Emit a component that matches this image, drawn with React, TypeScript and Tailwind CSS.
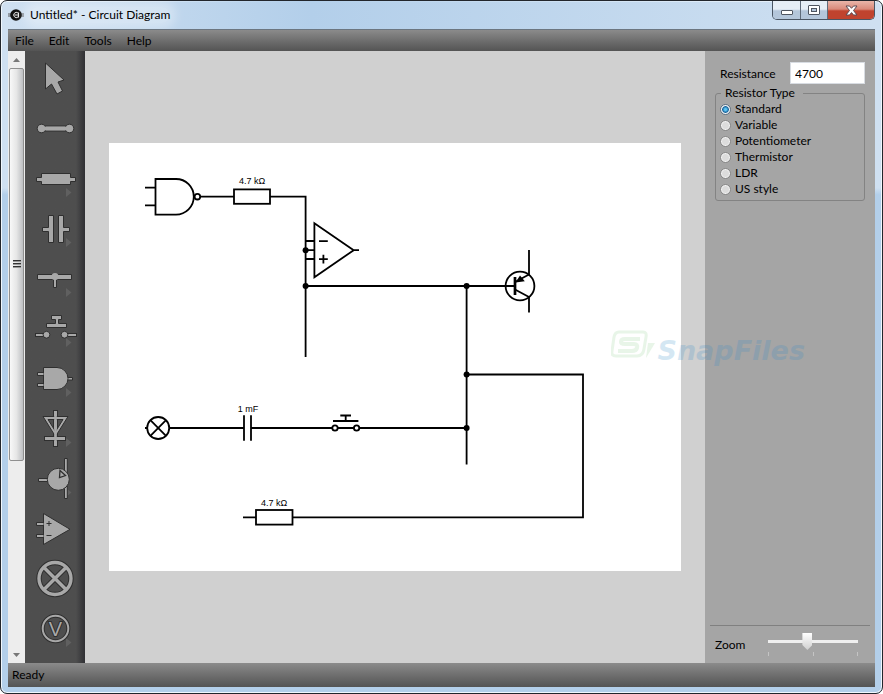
import { useState } from "react";
import type { ReactNode } from "react";

const resistorTypes = ["Standard", "Variable", "Potentiometer", "Thermistor", "LDR", "US style"];

type Tool = {
    name: string;
    hasMenu: boolean;
    icon: ReactNode;
};

const tools: Tool[] = [
    {
        name: "Select",
        hasMenu: false,
        icon: <path d="M20.5 9 V35 L26.5 30 L32 40 L37.5 37 L33 28 L39 26 Z"/>,
    },
    {
        name: "Wire",
        hasMenu: false,
        icon: (
            <>
                <rect x="17" y="22" width="27" height="5"/>
                <circle cx="16.5" cy="24.5" r="4.3"/>
                <circle cx="44.5" cy="24.5" r="4.3"/>
                <rect x="16" y="22.8" width="29" height="3.4" stroke="none"/>
            </>
        ),
    },
    {
        name: "Resistor",
        hasMenu: true,
        icon: <path d="M11.5 23.5 H16.5 V19.5 H45.5 V23.5 H50.5 V27.5 H45.5 V30.5 H16.5 V27.5 H11.5 Z"/>,
    },
    {
        name: "Capacitor",
        hasMenu: true,
        icon: (
            <>
                <path d="M17.5 23.5 H23.5 V11.5 H28.5 V38.5 H23.5 V27.5 H17.5 Z"/>
                <path d="M44.5 23.5 H38.5 V11.5 H33.5 V38.5 H38.5 V27.5 H44.5 Z"/>
            </>
        ),
    },
    {
        name: "Rail",
        hasMenu: true,
        icon: (
            <>
                <path d="M12.5 20.5 H46.5 V25.5 H31.5 V33.5 H28.5 V25.5 H12.5 Z"/>
                <circle cx="30" cy="22.5" r="3.5" stroke="none"/>
            </>
        ),
    },
    {
        name: "Push switch",
        hasMenu: true,
        icon: (
            <>
                <path d="M26.5 11.5 H36.5 V15.5 H33.5 V19.5 H41.5 V23.5 H21.5 V19.5 H30.5 V15.5 H26.5 Z"/>
                <rect x="10.5" y="29.5" width="9" height="3"/>
                <rect x="41.5" y="29.5" width="10" height="3"/>
                <circle cx="21.5" cy="30.7" r="3.4"/>
                <circle cx="39.5" cy="30.7" r="3.4"/>
            </>
        ),
    },
    {
        name: "Logic gate",
        hasMenu: true,
        icon: (
            <>
                <path d="M12.5 18.5 H20 V21.5 H12.5 Z M12.5 29.5 H20 V32.5 H12.5 Z M40 23.5 H47.5 V26 H40 Z"/>
                <path d="M18.5 13.5 H32 A11 11 0 0 1 32 35.5 H18.5 Z"/>
                <path d="M17 19.5 H21 V20.5 H17 Z M17 30.5 H21 V31.5 H17 Z" stroke="none"/>
            </>
        ),
    },
    {
        name: "Diode",
        hasMenu: true,
        icon: (
            <>
                <rect x="28.5" y="6.5" width="4" height="36"/>
                <path d="M18 12.5 H43 L30.5 32.5 Z M23 15.5 L30.5 27.5 L38 15.5 Z" fillRule="evenodd"/>
                <rect x="19.5" y="32.5" width="21" height="4"/>
                <rect x="29.2" y="8" width="2.6" height="34" stroke="none"/>
            </>
        ),
    },
    {
        name: "Transistor",
        hasMenu: true,
        icon: (
            <>
                <path d="M13.5 24.5 H24 V27.5 H13.5 Z M39.5 4.5 H42.3 V44.5 H39.5 Z"/>
                <circle cx="33.3" cy="25.3" r="11"/>
                <path d="M35 16.5 L40.5 21.5 L34.5 23.5 Z" strokeWidth="1.3"/>
            </>
        ),
    },
    {
        name: "Op amp",
        hasMenu: false,
        icon: (
            <>
                <path d="M11.5 18.5 H20 V21.5 H11.5 Z M11.5 30.5 H20 V33.5 H11.5 Z"/>
                <path d="M18.5 9.5 L45 25.3 L18.5 40.5 Z"/>
                <path d="M17 19.5 H20 V20.5 H17 Z M17 31.5 H20 V32.5 H17 Z" stroke="none"/>
                <path d="M21.5 19.5 H26.5 M24 17 V22 M21.5 31.5 H26.5"/>
            </>
        ),
    },
    {
        name: "Lamp",
        hasMenu: false,
        icon: (
            <>
                <g fill="none" stroke="#2f2f2f" strokeWidth="5.4">
                    <circle cx="30" cy="24.5" r="16"/>
                    <path d="M19 13.5 L41 35.5 M41 13.5 L19 35.5"/>
                </g>
                <g fill="none" stroke="#a8a8a8" strokeWidth="3.4">
                    <circle cx="30" cy="24.5" r="16"/>
                    <path d="M19 13.5 L41 35.5 M41 13.5 L19 35.5"/>
                </g>
            </>
        ),
    },
    {
        name: "Voltmeter",
        hasMenu: true,
        icon: (
            <>
                <circle cx="30.5" cy="24.5" r="12.8" fill="none" stroke="#2f2f2f" strokeWidth="4"/>
                <circle cx="30.5" cy="24.5" r="12.8" fill="none" stroke="#a8a8a8" strokeWidth="2"/>
                <text
                    x="30.5"
                    y="31.5"
                    textAnchor="middle"
                    paintOrder="stroke"
                    strokeWidth="2"
                    className="font-['Liberation_Sans',sans-serif] text-[20px]"
                >
                    V
                </text>
            </>
        ),
    },
];

const TitleBar = () => (
    <header className="flex h-7 shrink-0 items-start justify-between bg-linear-to-r from-transparent via-[#b3cfea] via-35% to-transparent">
        <div className="flex h-7 items-center gap-1.5">
            <svg className="h-4 w-4" viewBox="0 0 16 16">
                <path d="M0 7 H16 M0 9 H16" stroke="#555" strokeWidth="1"/>
                <circle cx="8" cy="8" r="5.8" fill="#111"/>
                <path d="M10 6 A2.6 2.6 0 1 0 10 10 M10.5 5.5 V10.5 M6.5 8 H10" fill="none" stroke="#eee" strokeWidth="1"/>
            </svg>
            <h1 className="rounded-full bg-white/30 text-xs shadow-[0_0_10px_6px_rgba(255,255,255,0.3)]">
                Untitled* - Circuit Diagram
            </h1>
        </div>
        <div className="flex h-[19px] overflow-hidden rounded-b-[5px] border border-t-0 border-[#4a5563]">
            <button
                type="button"
                aria-label="Minimize"
                className="flex w-7 items-center justify-center border-r border-[#5f6b7a] bg-linear-to-b from-[#e6eef6] from-45% to-[#b4c6da] to-55% pt-1"
            >
                <span className="h-[5px] w-3 rounded-[1px] border border-[#4f5560] bg-white"/>
            </button>
            <button
                type="button"
                aria-label="Maximize"
                className="flex w-[27px] items-center justify-center border-r border-[#5f6b7a] bg-linear-to-b from-[#e6eef6] from-45% to-[#b4c6da] to-55%"
            >
                <span className="flex h-[10px] w-3 items-center justify-center rounded-[1px] border border-[#4f5560] bg-white">
                    <span className="h-1 w-1.5 border border-[#4f5560] bg-[#b4c6da]"/>
                </span>
            </button>
            <button
                type="button"
                aria-label="Close"
                className="flex w-[46px] items-center justify-center bg-linear-to-b from-[#e9b5a9] via-[#d98a7b] via-45% to-[#c0432e] to-55%"
            >
                <svg className="h-[11px] w-[13px]" viewBox="0 0 13 11">
                    <path d="M1 1 H4.5 L6.5 3.3 L8.5 1 H12 L8.5 5.5 L12 10 H8.5 L6.5 7.6 L4.5 10 H1 L4.5 5.5 Z" fill="#fff" stroke="#5b4a52"/>
                </svg>
            </button>
        </div>
    </header>
);

const MenuBar = () => (
    <nav className="flex h-[22px] shrink-0 items-center gap-[15px] border-t border-[#6c7680] bg-linear-to-b from-[#8b8b8b] to-[#545454] pl-[7px] text-xs">
        {["File", "Edit", "Tools", "Help"].map((item) => (
            <button key={item} type="button">{item}</button>
        ))}
    </nav>
);

const ScrollBar = () => (
    <div className="flex w-[17px] shrink-0 flex-col bg-[#ededed]">
        <button type="button" aria-label="Scroll up" className="flex h-[17px] items-center justify-center">
            <svg className="h-1 w-[7px]" viewBox="0 0 7 4"><path d="M0 4 L3.5 0 L7 4 Z" fill="#777"/></svg>
        </button>
        <div className="mx-px flex grow-[392] basis-0 flex-col items-center justify-center gap-px rounded-xs border border-[#8f8f8f] bg-linear-to-r from-[#f8f8f8] via-[#e6e6e6] to-[#bdbfc2]">
            <span className="h-0.5 w-2 border-t border-[#333] bg-[#999]"/>
            <span className="h-0.5 w-2 border-t border-[#333] bg-[#999]"/>
            <span className="h-0.5 w-2 border-t border-[#333] bg-[#999]"/>
        </div>
        <div className="grow-[186] basis-0"/>
        <button type="button" aria-label="Scroll down" className="flex h-[17px] items-center justify-center">
            <svg className="h-1 w-[7px]" viewBox="0 0 7 4"><path d="M0 0 L3.5 4 L7 0 Z" fill="#777"/></svg>
        </button>
    </div>
);

const Toolbox = () => (
    <div className="flex w-[60px] shrink-0 flex-col bg-linear-to-r from-[#4e4e4e] from-85% to-[#303034] pt-[3px]">
        {tools.map((tool) => (
            <button key={tool.name} type="button" aria-label={tool.name} className="h-[50px]">
                <svg className="h-[50px] w-[60px]" viewBox="0 0 60 50" fill="#a8a8a8" stroke="#2f2f2f" strokeWidth="1">
                    {tool.hasMenu && <path d="M41 34 L46.5 38.5 L41 43 Z" fill="#606060" stroke="none"/>}
                    {tool.icon}
                </svg>
            </button>
        ))}
    </div>
);

const Circuit = () => (
    <svg className="h-auto w-[572px] bg-white" viewBox="109 143 572 428" role="img" aria-label="Circuit">
        <g fill="none" stroke="#000" strokeWidth="1.8">
            {/* nand gate */}
            <path d="M145 187.7 H155.5 M145 205.3 H155.5"/>
            <path d="M155.5 179 H176 A17.8 17.8 0 0 1 176 214.6 H155.5 Z"/>
            <circle cx="197.4" cy="196.7" r="2.8"/>
            {/* top resistor */}
            <path d="M200.5 196.7 H234 M270 196.7 H305.6 V357"/>
            <rect x="234" y="189.4" width="36" height="14.4"/>
            {/* op amp */}
            <path d="M305.6 241 H314.4 M305.6 250.2 H314.4 M305.6 259 H314.4"/>
            <path d="M314.4 223.3 L353.7 250.2 L314.4 277.2 Z M353.7 250.2 H359"/>
            <path d="M319 241.2 H327.8 M319 259.2 H327.8 M323.4 254.8 V263.6"/>
            {/* transistor */}
            <path d="M305.6 286 H515"/>
            <circle cx="520" cy="286" r="14.4"/>
            <path d="M515 277 V295" strokeWidth="2.7"/>
            <path d="M529 250 V274.5 L515 282 M515 289.5 L529 297 V312.5"/>
            {/* right hand loop */}
            <path d="M466.6 286 V464.5 M466.6 374.5 H583 V517.4 H292.5 M256 517.4 H243"/>
            <rect x="256" y="510" width="36.5" height="14.6"/>
            {/* lamp */}
            <circle cx="158.2" cy="428" r="11"/>
            <path d="M150.4 420.2 L166 435.8 M166 420.2 L150.4 435.8 M145 428 H147.5"/>
            {/* capacitor */}
            <path d="M169.5 428 H244 M251 428 H332.3 M244 415.3 V440.7 M251 415.3 V440.7"/>
            {/* push switch */}
            <circle cx="335" cy="428" r="2.7"/>
            <circle cx="356.6" cy="428" r="2.7"/>
            <path d="M337.7 428 H353.9 M359.3 428 H466.6 M333 421 H358.4 M345.7 421 V415.5 M340.3 415.5 H351"/>
        </g>
        <path d="M515.5 282.5 L520 275.6 L524.8 281.2 Z"/>
        <circle cx="305.6" cy="250.2" r="3"/>
        <circle cx="305.6" cy="286" r="3"/>
        <circle cx="466.6" cy="286" r="3"/>
        <circle cx="466.6" cy="374.5" r="3"/>
        <circle cx="466.6" cy="428" r="3"/>
        <g textAnchor="middle" className="font-['Liberation_Sans',sans-serif] text-[9px]">
            <text x="252" y="184">4.7 kΩ</text>
            <text x="248" y="412">1 mF</text>
            <text x="274" y="506">4.7 kΩ</text>
        </g>
    </svg>
);

const Properties = () => {
    const [resistance, setResistance] = useState("4700");
    const [resistorType, setResistorType] = useState("Standard");
    const [zoom, setZoom] = useState(43);

    return (
        <aside className="flex w-[170px] shrink-0 flex-col justify-between bg-[#a5a5a5] text-xs">
            <div className="px-2.5 pt-[11px]">
                <div className="flex h-[23px] items-start justify-between pl-[5px]">
                    <label htmlFor="resistance" className="pt-1">Resistance</label>
                    <input
                        id="resistance"
                        type="text"
                        value={resistance}
                        onChange={(e) => setResistance(e.target.value)}
                        className="h-[22px] w-[75px] border border-[#d8dce2] bg-white px-1"
                    />
                </div>
                <fieldset className="rounded-[3px] border border-[#838383] px-1 pb-[3px]">
                    <legend className="ml-px px-1 pr-2 leading-4">Resistor Type</legend>
                    {resistorTypes.map((type) => (
                        <label key={type} className="flex h-4 items-center gap-1">
                            <input
                                type="radio"
                                name="resistor-type"
                                checked={resistorType === type}
                                onChange={() => setResistorType(type)}
                                className="h-[11px] w-[11px] appearance-none rounded-full border border-[#868686] bg-[#dcdcdc] shadow-[inset_0_0_0_1px_#f4f4f4] checked:border-[#5d6f80] checked:bg-[radial-gradient(circle,#5cc4f2_0_1px,#17639c_3px,#e8f0f6_4px)]"
                            />
                            {type}
                        </label>
                    ))}
                </fieldset>
            </div>
            <div className="mx-[5px] flex h-[38px] items-center justify-between border-t border-[#808080] pr-3 pl-[5px]">
                <label htmlFor="zoom">Zoom</label>
                <div className="w-[90px]">
                    <input
                        id="zoom"
                        type="range"
                        min="0"
                        max="100"
                        value={zoom}
                        onChange={(e) => setZoom(Number(e.target.value))}
                        className="block h-[17px] w-full appearance-none bg-transparent [&::-webkit-slider-runnable-track]:h-[3px] [&::-webkit-slider-runnable-track]:bg-[#efefef] [&::-webkit-slider-thumb]:-mt-[7px] [&::-webkit-slider-thumb]:h-[17px] [&::-webkit-slider-thumb]:w-[10px] [&::-webkit-slider-thumb]:appearance-none [&::-webkit-slider-thumb]:bg-linear-to-b [&::-webkit-slider-thumb]:from-white [&::-webkit-slider-thumb]:to-[#d0d0d0] [&::-webkit-slider-thumb]:[clip-path:polygon(0_0,100%_0,100%_70%,50%_100%,0_70%)]"
                    />
                    <div className="mt-0.5 flex h-1 justify-between">
                        <span className="w-px bg-[#c4c4c4]"/>
                        <span className="w-px bg-[#c4c4c4]"/>
                        <span className="w-px bg-[#c4c4c4]"/>
                    </div>
                </div>
            </div>
        </aside>
    );
};

const Watermark = () => (
    <div className="pointer-events-none absolute top-[328px] right-[77px] flex items-start gap-0.5 opacity-20">
        <svg className="h-8 w-[44px]" viewBox="0 0 44 32" fill="none" stroke="#8fd08f">
            <path d="M8 3 H32 Q36 3 35 8 L33 20 Q32 27 26 27 H5 Q0 27 1 22 L3 8 Q4 3 8 3 Z" strokeWidth="3"/>
            <path d="M29 10 H14 Q10 10 10 13 Q10 15 14 15 H23 Q27 15 26 19 Q25 22 21 22 H7" strokeWidth="4"/>
            <path d="M37 14 H44 L35 29 Z" fill="#8fd08f" stroke="none"/>
        </svg>
        <span className="pt-1.5 font-['DejaVu_Sans',sans-serif] text-[27px] leading-8 font-bold text-[#2f8ac8] italic">SnapFiles</span>
    </div>
);

const App = () => (
    <div className="relative flex h-screen min-h-[694px] flex-col overflow-hidden rounded-[7px] border border-[#22262c] bg-linear-to-b from-[#cfe0f1] from-27% to-[#b3cfea] to-28% px-[7px] pb-[6px] font-['Lato','Open_Sans',sans-serif] text-black shadow-[inset_0_0_0_1px_#f0f7fd]">
        <TitleBar/>
        <MenuBar/>
        <main className="flex flex-1">
            <ScrollBar/>
            <Toolbox/>
            <div className="flex min-w-0 flex-1 items-center justify-center bg-[#d0d0d0]">
                <Circuit/>
            </div>
            <Properties/>
        </main>
        <footer className="flex h-6 shrink-0 items-center bg-linear-to-b from-[#8b8b8b] to-[#545454] pl-1 text-xs">
            Ready
        </footer>
        <Watermark/>
    </div>
);

export default App;
